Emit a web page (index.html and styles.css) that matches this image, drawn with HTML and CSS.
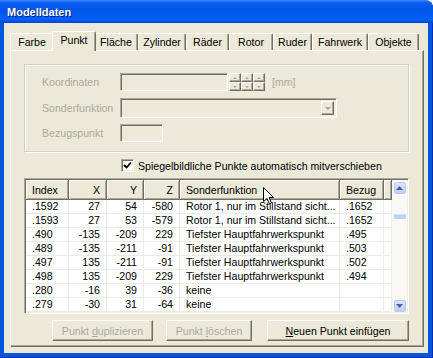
FILE: index.html
```html
<!DOCTYPE html>
<html lang="de">
  <head>
    <meta charset="UTF-8" />
    <title>Modelldaten</title>
    <link rel="stylesheet" href="styles.css">
  </head>
  <body>
    <div class="window">
      <div class="titlebar">Modelldaten</div>
      <div class="client">
        <div class="tabs">
          <div class="tab w-farbe">Farbe</div>
          <div class="tab active w-punkt">Punkt</div>
          <div class="tab w-flaeche">Fläche</div>
          <div class="tab w-zylinder">Zylinder</div>
          <div class="tab w-raeder">Räder</div>
          <div class="tab w-rotor">Rotor</div>
          <div class="tab w-ruder">Ruder</div>
          <div class="tab w-fahrwerk">Fahrwerk</div>
          <div class="tab w-objekte">Objekte</div>
        </div>

        <div class="page">
          <div class="group">
            <div class="row row-koord">
              <span class="lbl">Koordinaten</span>
              <div class="edit edit-koord"></div>
              <div class="spin">
                <div class="spinbtn"><span class="arr up"></span></div>
                <div class="spinbtn"><span class="arr up"></span></div>
                <div class="spinbtn"><span class="arr up"></span></div>
                <div class="spinbtn"><span class="arr down"></span></div>
                <div class="spinbtn"><span class="arr down"></span></div>
                <div class="spinbtn"><span class="arr down"></span></div>
              </div>
              <span class="unit">[mm]</span>
            </div>
            <div class="row row-sonder">
              <span class="lbl">Sonderfunktion</span>
              <div class="edit combo">
                <div class="dropbtn"><span class="arr down"></span></div>
              </div>
            </div>
            <div class="row row-bezug">
              <span class="lbl">Bezugspunkt</span>
              <div class="edit edit-bezug"></div>
            </div>
          </div>

          <div class="checkrow">
            <div class="checkbox">
              <svg width="9" height="9" viewBox="0 0 9 9"><path d="M1 4 L3.5 6.5 L8 1.5" fill="none" stroke="#000" stroke-width="1.8"/></svg>
            </div>
            <span>Spiegelbildliche Punkte automatisch mitverschieben</span>
          </div>

          <div class="list">
            <table class="grid">
              <thead>
                <tr>
                  <th class="c-index">Index</th>
                  <th class="c-num">X</th>
                  <th class="c-num c-y">Y</th>
                  <th class="c-num c-z">Z</th>
                  <th class="c-sonder">Sonderfunktion</th>
                  <th class="c-bezug">Bezug</th>
                  <th class="c-fill"></th>
                </tr>
              </thead>
              <tbody>
                <tr><td>.1592</td><td class="num">27</td><td class="num">54</td><td class="num">-580</td><td>Rotor 1, nur im Stillstand sicht...</td><td>.1652</td><td></td></tr>
                <tr><td>.1593</td><td class="num">27</td><td class="num">53</td><td class="num">-579</td><td>Rotor 1, nur im Stillstand sicht...</td><td>.1652</td><td></td></tr>
                <tr><td>.490</td><td class="num">-135</td><td class="num">-209</td><td class="num">229</td><td>Tiefster Hauptfahrwerkspunkt</td><td>.495</td><td></td></tr>
                <tr><td>.489</td><td class="num">-135</td><td class="num">-211</td><td class="num">-91</td><td>Tiefster Hauptfahrwerkspunkt</td><td>.503</td><td></td></tr>
                <tr><td>.497</td><td class="num">135</td><td class="num">-211</td><td class="num">-91</td><td>Tiefster Hauptfahrwerkspunkt</td><td>.502</td><td></td></tr>
                <tr><td>.498</td><td class="num">135</td><td class="num">-209</td><td class="num">229</td><td>Tiefster Hauptfahrwerkspunkt</td><td>.494</td><td></td></tr>
                <tr><td>.280</td><td class="num">-16</td><td class="num">39</td><td class="num">-36</td><td>keine</td><td></td><td></td></tr>
                <tr><td>.279</td><td class="num">-30</td><td class="num">31</td><td class="num">-64</td><td>keine</td><td></td><td></td></tr>
              </tbody>
            </table>
            <div class="vscroll">
              <div class="sbtn"><svg width="7" height="4" viewBox="0 0 7 4"><path d="M0 4 L3.5 0 L7 4 Z" fill="#4d6185"/></svg></div>
              <div class="thumb"></div>
              <div class="sbtn"><svg width="7" height="4" viewBox="0 0 7 4"><path d="M0 0 L3.5 4 L7 0 Z" fill="#4d6185"/></svg></div>
            </div>
          </div>

          <div class="buttons">
            <button class="btn btn-dup" disabled>Punkt <u>d</u>uplizieren</button>
            <button class="btn btn-del" disabled>Punkt <u>l</u>öschen</button>
            <button class="btn btn-new">Neuen Punkt einfügen</button>
          </div>
        </div>
      </div>

      <svg class="cursor" width="12" height="18" viewBox="0 0 12 18">
        <path d="M0.5 0.5 L0.5 14.5 L4 11.5 L6.5 17 L8.5 16 L6 10.5 L10.5 10.5 Z" fill="#fff" stroke="#000" stroke-width="1"/>
      </svg>
    </div>
  </body>
</html>
```

FILE: styles.css
```css
body {
  margin: 0;
  background: #fff;
  font-family: "Liberation Sans", Arial, sans-serif;
  font-size: 10.6px;
  color: #000;
}

.window {
  position: relative;
  width: 433px;
  height: 358px;
  box-sizing: border-box;
  padding: 0 5px 5px 4px;
  display: flex;
  flex-direction: column;
  background: #0855dd;
  border-top-right-radius: 8px;
  box-shadow: inset -1px -1px #002fb0;
}

.titlebar {
  height: 23px;
  line-height: 24px;
  padding-left: 3px;
  color: #fff;
  font-weight: bold;
  font-size: 11px;
  text-shadow: 1px 1px #0a1e80;
  background: linear-gradient(#3d8bff 0%, #0a5ef0 12%, #0054e8 45%, #0060f8 85%, #0044d6 100%);
  margin-right: -5px;
  margin-left: -4px;
  padding-left: 7px;
  border-top-right-radius: 8px;
}

.client {
  flex: 1;
  background: #ece9d8;
  padding: 8px 4px 6px 6px;
}

/* tabs */
.tabs {
  display: flex;
  align-items: flex-end;
  height: 19px;
}

.tab {
  height: 16px;
  line-height: 17px;
  text-align: center;
  box-sizing: border-box;
  height: 17px;
  border-top: 1px solid #fff;
  border-left: 1px solid #fff;
  border-right: 1px solid #716f64;
  box-shadow: inset -1px 0 #aca899;
  border-radius: 2px 2px 0 0;
  background: #ece9d8;
}

.tab.active {
  height: 20px;
  line-height: 17px;
  margin: 0 -2px -1px;
  z-index: 1;
}

.w-farbe { width: 44px; }
.w-punkt { width: 44px; }
.w-flaeche { width: 44px; }
.w-zylinder { width: 48px; }
.w-raeder { width: 43px; }
.w-rotor { width: 44px; }
.w-ruder { width: 39px; }
.w-fahrwerk { width: 56px; }
.w-objekte { width: 51px; }

.page {
  width: 414px;
  height: 297px;
  box-sizing: border-box;
  padding: 13px 13px 0 13px;
  border-top: 1px solid #fff;
  border-left: 1px solid #fff;
  border-right: 1px solid #716f64;
  border-bottom: 1px solid #716f64;
  box-shadow: inset -1px -1px #aca899;
}

/* group box */
.group {
  width: 385px;
  height: 88px;
  box-sizing: border-box;
  padding: 8px 0 0 17px;
  border: 1px solid #d0d0bf;
  box-shadow: inset 1px 1px #fff, 1px 1px #fff;
  color: #aca899;
}

.row {
  display: flex;
  align-items: center;
}

.row-sonder { margin-top: 7px; }
.row-bezug { margin-top: 6px; }

.lbl {
  width: 78px;
}

.edit {
  box-sizing: border-box;
  height: 18px;
  border: 1px solid;
  border-color: #aca899 #fff #fff #aca899;
  box-shadow: inset 1px 1px #716f64, inset -1px -1px #f1efe2;
  background: #ece9d8;
}

.edit-koord { width: 108px; }
.edit-bezug { width: 43px; }

.combo {
  width: 217px;
  height: 20px;
  display: flex;
  justify-content: flex-end;
  padding: 2px;
}

.dropbtn {
  width: 13px;
  box-sizing: border-box;
  border: 1px solid;
  border-color: #fff #716f64 #716f64 #fff;
  box-shadow: inset -1px -1px #aca899;
  display: flex;
  align-items: center;
  justify-content: center;
}

.spin {
  display: grid;
  grid-template-columns: repeat(3, 12px);
  grid-template-rows: 9px 9px;
  margin-left: 1px;
}

.spinbtn {
  box-sizing: border-box;
  border: 1px solid;
  border-color: #fff #716f64 #716f64 #fff;
  box-shadow: inset -1px -1px #aca899;
  display: flex;
  align-items: center;
  justify-content: center;
}

.arr {
  width: 0;
  height: 0;
  border-left: 2px solid transparent;
  border-right: 2px solid transparent;
}

.arr.up { border-bottom: 2px solid #aca899; }
.arr.down { border-top: 2px solid #aca899; }
.dropbtn .arr { border-width: 3px 3px 0; }

.unit {
  margin-left: 7px;
}

/* checkbox */
.checkrow {
  display: flex;
  align-items: center;
  margin-top: 7px;
  height: 13px;
  padding-left: 97px;
}

.checkbox {
  width: 13px;
  height: 13px;
  box-sizing: border-box;
  border: 1px solid;
  border-color: #aca899 #fff #fff #aca899;
  box-shadow: inset 1px 1px #716f64, inset -1px -1px #f1efe2;
  background: #fff;
  display: flex;
  align-items: center;
  justify-content: center;
  margin-right: 4px;
}

/* list view */
.list {
  margin-top: 6px;
  width: 385px;
  height: 136px;
  box-sizing: border-box;
  border: 1px solid;
  border-color: #aca899 #fff #fff #aca899;
  box-shadow: inset 1px 1px #716f64, inset -1px -1px #f1efe2;
  padding: 1px;
  display: flex;
  background: #fff;
}

.grid {
  width: 366px;
  table-layout: fixed;
  border-collapse: separate;
  border-spacing: 0;
  align-self: flex-start;
}

.grid th {
  height: 19px;
  padding: 0 6px;
  font-weight: normal;
  text-align: left;
  background: #ece9d8;
  border-right: 1px solid #716f64;
  border-bottom: 1px solid #716f64;
  box-shadow: inset 1px 1px #fff, inset -1px -1px #aca899;
  white-space: nowrap;
  overflow: hidden;
}

.grid th.c-num { text-align: right; }
.c-index { width: 30px; }
.c-num { width: 25px; }
.c-y { width: 24px; }
.c-z { width: 23px; }
.c-sonder { width: 147px; }
.c-bezug { width: 31px; }
.grid th.c-fill { width: 7px; padding: 0; }

.grid td {
  height: 13px;
  line-height: 13px;
  padding: 0 6px;
  border-right: 1px solid #ebeae4;
  border-bottom: 1px solid #ebeae4;
  white-space: nowrap;
  overflow: hidden;
}

.grid td:last-child { padding: 0; }
.grid td.num { text-align: right; }

.vscroll {
  width: 15px;
  display: flex;
  flex-direction: column;
  align-items: center;
  padding: 2px 0 0;
  background: #f9f8f4;
}

.sbtn {
  width: 12px;
  height: 12px;
  box-sizing: border-box;
  border: 1px solid #b7c8f2;
  border-radius: 2px;
  background: linear-gradient(#dbe5fd, #bccdf8);
  display: flex;
  align-items: center;
  justify-content: center;
}

.thumb {
  width: 12px;
  height: 4px;
  margin: 20px 0 auto;
  border-radius: 1px;
  background: #c1d1fa;
  border-top: 1px solid #d9e3fd;
}

/* buttons */
.buttons {
  display: flex;
  margin-top: 6px;
  padding-left: 28px;
}

.btn {
  height: 21px;
  padding: 0;
  font: inherit;
  background: #ece9d8;
  border: 1px solid;
  border-color: #fff #716f64 #716f64 #fff;
  box-shadow: inset -1px -1px #aca899;
  color: #000;
}

.btn:disabled {
  color: #aca899;
}

.btn-dup { width: 101px; }
.btn-del { width: 86px; margin-left: 13px; }
.btn-new { width: 142px; margin-left: 15px; }

.btn-new::first-letter {
  text-decoration: underline;
}

.cursor {
  position: absolute;
  left: 263px;
  top: 187px;
}
```
